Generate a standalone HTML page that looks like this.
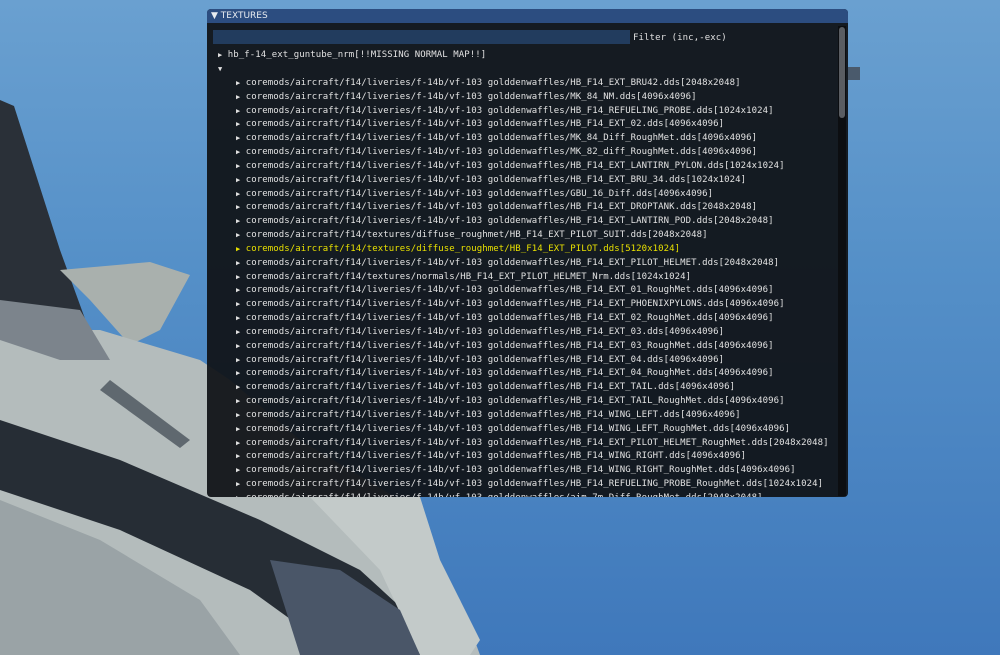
<!DOCTYPE html>
<html><head><meta charset="utf-8"><style>
body{margin:0;width:1000px;height:655px;overflow:hidden;position:relative;background:linear-gradient(180deg,#6aa0d0 0%,#5590c8 40%,#3f78bb 100%);font-family:"DejaVu Sans Mono","Liberation Mono",monospace;}
svg.bg{position:absolute;left:0;top:0}
.win{position:absolute;left:207px;top:9px;width:641px;height:488px;background:rgba(16,19,23,0.94);border-radius:4px;overflow:hidden;}
.title{height:14px;background:#2c4d80;color:#e8ecf0;font:9px "DejaVu Sans",sans-serif;line-height:14px;padding-left:4px;}
.filter{position:absolute;left:6px;top:21px;width:417px;height:14px;background:#223c5e;}
.fl{position:absolute;left:426px;top:24px;color:#e0e0e0;font-size:9px;letter-spacing:0.1px}
.rows{position:absolute;left:0;top:0;font-size:9px;color:#e2e2e2;white-space:pre;letter-spacing:0.08px}
.r{position:absolute;white-space:pre;line-height:13.83px}
.y{color:#e8e000}
.sb{position:absolute;left:631px;top:17px;width:8px;height:470px;background:#0c0e11}
.th{position:absolute;left:632px;top:18px;width:6px;height:91px;background:#5a5d62;border-radius:3px}
.a{font-size:7px}
</style></head><body>
<svg class="bg" width="1000" height="655">
<polygon points="848,67 860,67 860,80 848,80" fill="#4a5a6c"/>
<polygon points="0,100 14,106 60,250 100,360 0,340" fill="#2a3038"/>
<polygon points="60,270 150,262 190,275 160,330 130,345 90,300" fill="#a9b0ad"/>
<polygon points="0,330 100,330 200,360 230,380 300,440 400,500 460,600 480,655 0,655" fill="#b4bcbc"/>
<polygon points="0,300 80,310 110,360 60,360 0,340" fill="#7c848c"/>
<polygon points="0,420 120,460 260,520 360,570 420,625 440,655 340,655 250,590 120,530 0,490" fill="#262d35"/>
<polygon points="0,500 100,540 200,600 240,655 0,655" fill="#9aa3a6"/>
<polygon points="310,497 420,497 440,560 480,640 470,655 420,655 380,570" fill="#c3cac9"/>
<polygon points="270,560 340,570 400,610 420,655 300,655" fill="#4a5668"/>
<polygon points="110,380 190,440 180,448 100,390" fill="#5f686f"/>
</svg>
<div class="win">
<div class="title">▼ TEXTURES</div>
<div class="filter"></div>
<div class="fl">Filter (inc,-exc)</div>
<div class="sb"></div><div class="th"></div>
<div class="rows">
<div class="r" style="left:11px;top:40px"><span class="a">▶</span> hb_f-14_ext_guntube_nrm[!!MISSING NORMAL MAP!!]</div>
<div class="r" style="left:11px;top:54px"><span class="a">▼</span></div>
<div class="r" style="left:29px;top:68px"><span class="a">▶</span> coremods/aircraft/f14/liveries/f-14b/vf-103 golddenwaffles/HB_F14_EXT_BRU42.dds[2048x2048]
<span class="a">▶</span> coremods/aircraft/f14/liveries/f-14b/vf-103 golddenwaffles/MK_84_NM.dds[4096x4096]
<span class="a">▶</span> coremods/aircraft/f14/liveries/f-14b/vf-103 golddenwaffles/HB_F14_REFUELING_PROBE.dds[1024x1024]
<span class="a">▶</span> coremods/aircraft/f14/liveries/f-14b/vf-103 golddenwaffles/HB_F14_EXT_02.dds[4096x4096]
<span class="a">▶</span> coremods/aircraft/f14/liveries/f-14b/vf-103 golddenwaffles/MK_84_Diff_RoughMet.dds[4096x4096]
<span class="a">▶</span> coremods/aircraft/f14/liveries/f-14b/vf-103 golddenwaffles/MK_82_diff_RoughMet.dds[4096x4096]
<span class="a">▶</span> coremods/aircraft/f14/liveries/f-14b/vf-103 golddenwaffles/HB_F14_EXT_LANTIRN_PYLON.dds[1024x1024]
<span class="a">▶</span> coremods/aircraft/f14/liveries/f-14b/vf-103 golddenwaffles/HB_F14_EXT_BRU_34.dds[1024x1024]
<span class="a">▶</span> coremods/aircraft/f14/liveries/f-14b/vf-103 golddenwaffles/GBU_16_Diff.dds[4096x4096]
<span class="a">▶</span> coremods/aircraft/f14/liveries/f-14b/vf-103 golddenwaffles/HB_F14_EXT_DROPTANK.dds[2048x2048]
<span class="a">▶</span> coremods/aircraft/f14/liveries/f-14b/vf-103 golddenwaffles/HB_F14_EXT_LANTIRN_POD.dds[2048x2048]
<span class="a">▶</span> coremods/aircraft/f14/textures/diffuse_roughmet/HB_F14_EXT_PILOT_SUIT.dds[2048x2048]
<span class="y"><span class="a">▶</span> coremods/aircraft/f14/textures/diffuse_roughmet/HB_F14_EXT_PILOT.dds[5120x1024]</span>
<span class="a">▶</span> coremods/aircraft/f14/liveries/f-14b/vf-103 golddenwaffles/HB_F14_EXT_PILOT_HELMET.dds[2048x2048]
<span class="a">▶</span> coremods/aircraft/f14/textures/normals/HB_F14_EXT_PILOT_HELMET_Nrm.dds[1024x1024]
<span class="a">▶</span> coremods/aircraft/f14/liveries/f-14b/vf-103 golddenwaffles/HB_F14_EXT_01_RoughMet.dds[4096x4096]
<span class="a">▶</span> coremods/aircraft/f14/liveries/f-14b/vf-103 golddenwaffles/HB_F14_EXT_PHOENIXPYLONS.dds[4096x4096]
<span class="a">▶</span> coremods/aircraft/f14/liveries/f-14b/vf-103 golddenwaffles/HB_F14_EXT_02_RoughMet.dds[4096x4096]
<span class="a">▶</span> coremods/aircraft/f14/liveries/f-14b/vf-103 golddenwaffles/HB_F14_EXT_03.dds[4096x4096]
<span class="a">▶</span> coremods/aircraft/f14/liveries/f-14b/vf-103 golddenwaffles/HB_F14_EXT_03_RoughMet.dds[4096x4096]
<span class="a">▶</span> coremods/aircraft/f14/liveries/f-14b/vf-103 golddenwaffles/HB_F14_EXT_04.dds[4096x4096]
<span class="a">▶</span> coremods/aircraft/f14/liveries/f-14b/vf-103 golddenwaffles/HB_F14_EXT_04_RoughMet.dds[4096x4096]
<span class="a">▶</span> coremods/aircraft/f14/liveries/f-14b/vf-103 golddenwaffles/HB_F14_EXT_TAIL.dds[4096x4096]
<span class="a">▶</span> coremods/aircraft/f14/liveries/f-14b/vf-103 golddenwaffles/HB_F14_EXT_TAIL_RoughMet.dds[4096x4096]
<span class="a">▶</span> coremods/aircraft/f14/liveries/f-14b/vf-103 golddenwaffles/HB_F14_WING_LEFT.dds[4096x4096]
<span class="a">▶</span> coremods/aircraft/f14/liveries/f-14b/vf-103 golddenwaffles/HB_F14_WING_LEFT_RoughMet.dds[4096x4096]
<span class="a">▶</span> coremods/aircraft/f14/liveries/f-14b/vf-103 golddenwaffles/HB_F14_EXT_PILOT_HELMET_RoughMet.dds[2048x2048]
<span class="a">▶</span> coremods/aircraft/f14/liveries/f-14b/vf-103 golddenwaffles/HB_F14_WING_RIGHT.dds[4096x4096]
<span class="a">▶</span> coremods/aircraft/f14/liveries/f-14b/vf-103 golddenwaffles/HB_F14_WING_RIGHT_RoughMet.dds[4096x4096]
<span class="a">▶</span> coremods/aircraft/f14/liveries/f-14b/vf-103 golddenwaffles/HB_F14_REFUELING_PROBE_RoughMet.dds[1024x1024]
<span class="a">▶</span> coremods/aircraft/f14/liveries/f-14b/vf-103 golddenwaffles/aim_7m_Diff_RoughMet.dds[2048x2048]</div>
</div>
</div>
</body></html>
